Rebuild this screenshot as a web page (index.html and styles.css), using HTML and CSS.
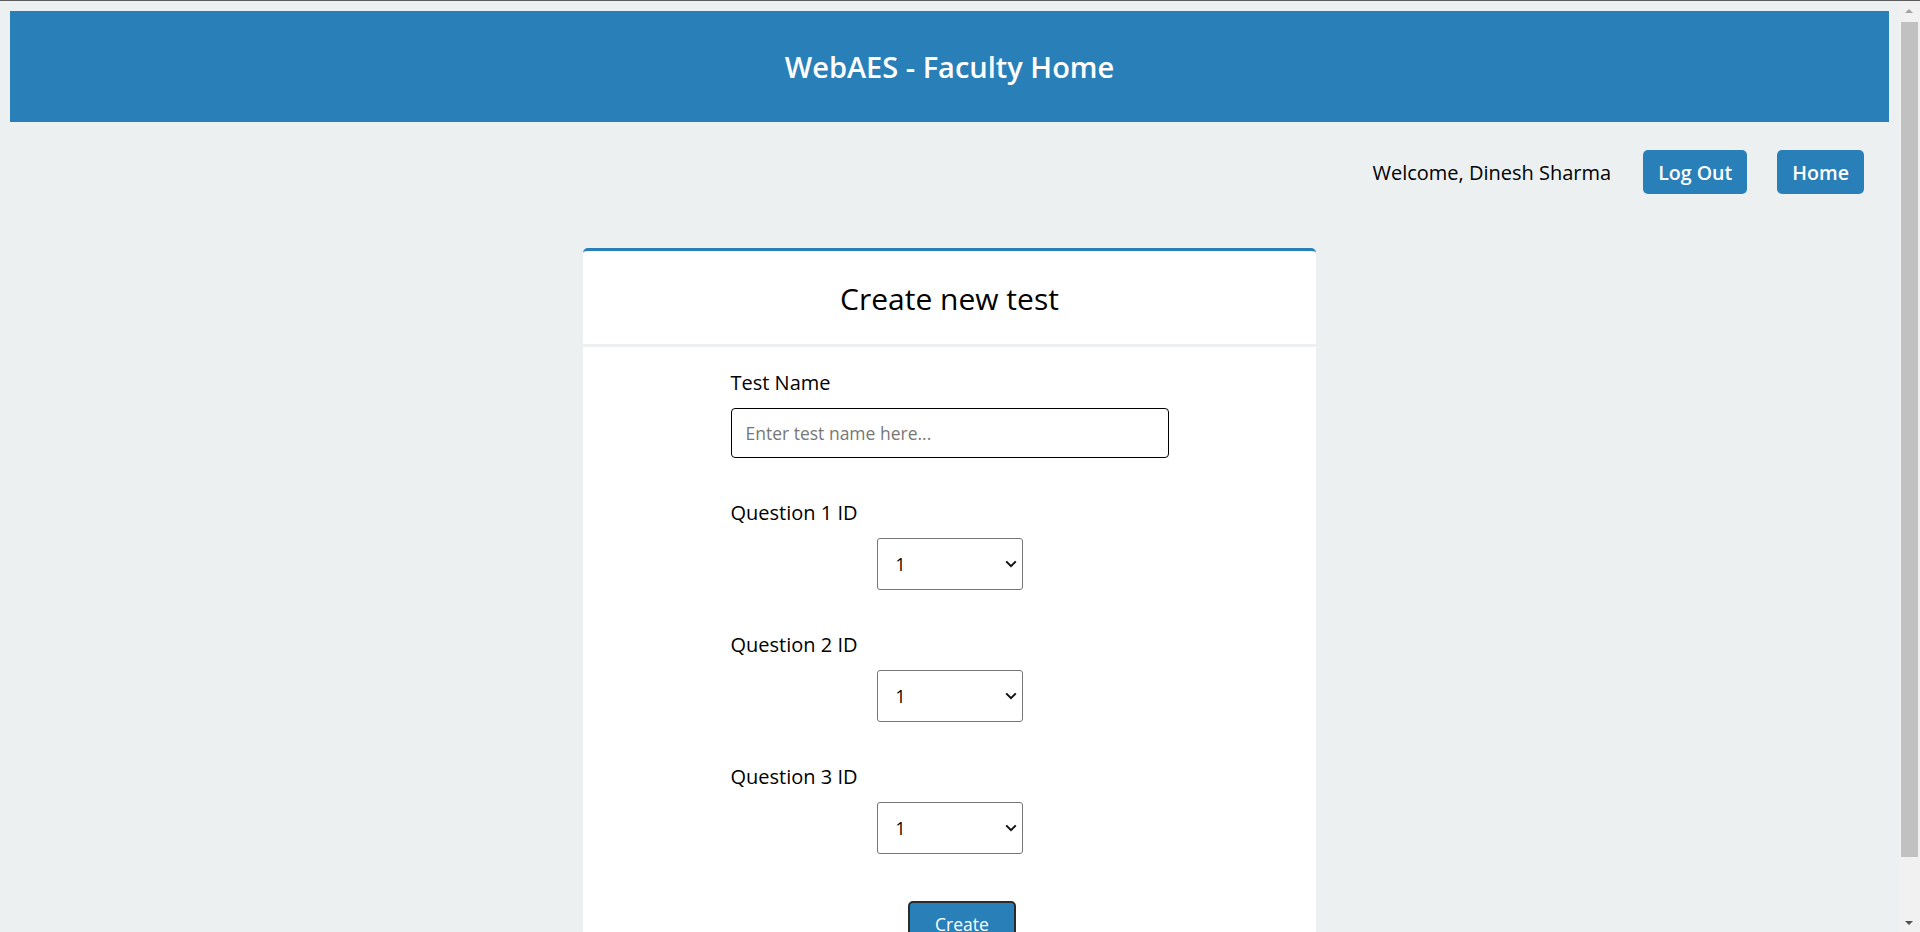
FILE: index.html
```html
<!DOCTYPE html>
<html lang="en">
<head>
<meta charset="utf-8">
<title>WebAES - Faculty Home</title>
<link rel="stylesheet" href="styles.css">
</head>
<body>
<header class="topbar">
  <h1 class="topbar-title">WebAES - Faculty Home</h1>
</header>

<div class="userbar">
  <span class="welcome">Welcome, Dinesh Sharma</span>
  <a class="btn" href="#">Log Out</a>
  <a class="btn" href="#">Home</a>
</div>

<main class="card">
  <div class="card-head">
    <h2 class="card-title">Create new test</h2>
  </div>
  <form class="card-body">
    <div class="field">
      <label class="field-label" for="testname">Test Name</label>
      <input class="text-input" id="testname" type="text" placeholder="Enter test name here...">
    </div>
    <div class="field">
      <label class="field-label" for="q1">Question 1 ID</label>
      <div class="select-wrap">
        <select class="id-select" id="q1"><option>1</option><option>2</option><option>3</option></select>
        <svg class="chevron" width="12" height="8" viewBox="0 0 12 8" aria-hidden="true"><path d="M1.2 1.4 L6 6.2 L10.8 1.4" fill="none" stroke="#111" stroke-width="2"/></svg>
      </div>
    </div>
    <div class="field">
      <label class="field-label" for="q2">Question 2 ID</label>
      <div class="select-wrap">
        <select class="id-select" id="q2"><option>1</option><option>2</option><option>3</option></select>
        <svg class="chevron" width="12" height="8" viewBox="0 0 12 8" aria-hidden="true"><path d="M1.2 1.4 L6 6.2 L10.8 1.4" fill="none" stroke="#111" stroke-width="2"/></svg>
      </div>
    </div>
    <div class="field">
      <label class="field-label" for="q3">Question 3 ID</label>
      <div class="select-wrap">
        <select class="id-select" id="q3"><option>1</option><option>2</option><option>3</option></select>
        <svg class="chevron" width="12" height="8" viewBox="0 0 12 8" aria-hidden="true"><path d="M1.2 1.4 L6 6.2 L10.8 1.4" fill="none" stroke="#111" stroke-width="2"/></svg>
      </div>
    </div>
    <div class="actions">
      <button class="create-btn" type="button">Create</button>
    </div>
  </form>
</main>

<div class="fake-scrollbar" aria-hidden="true">
  <span class="sb-arrow sb-up"></span>
  <span class="sb-thumb"></span>
  <span class="sb-arrow sb-down"></span>
</div>
</body>
</html>
```

FILE: styles.css
```css
html {
  background: #ecf0f1;
  border-top: 1px solid #5b5b5b;
}

body {
  margin: 10px 31px 10px 10px;
  font-family: "Open Sans", "Liberation Sans", sans-serif;
  color: #000;
}

.topbar {
  height: 111px;
  background: #2980b9;
  display: flex;
  align-items: center;
  justify-content: center;
}

.topbar-title {
  margin: 0;
  color: #fff;
  font-size: 29px;
  font-weight: 600;
  line-height: 44px;
}

.userbar {
  display: flex;
  justify-content: flex-end;
  align-items: center;
  height: 44px;
  margin-top: 28px;
  padding-right: 25px;
}

.welcome {
  font-size: 20px;
  line-height: 27px;
  margin-right: 32px;
}

.btn {
  display: flex;
  align-items: center;
  height: 44px;
  box-sizing: border-box;
  padding: 0 15px;
  background: #2980b9;
  color: #fff;
  font-size: 19.6px;
  font-weight: 600;
  text-decoration: none;
  border-radius: 5px;
}

.btn + .btn {
  margin-left: 30px;
}

.card {
  width: 733px;
  margin: 54px auto 0;
  background: #fff;
  border-top: 3px solid #2980b9;
  border-radius: 5px 5px 0 0;
}

.card-head {
  padding: 27px 0 25px;
  border-bottom: 3px solid #ecf0f1;
  text-align: center;
}

.card-title {
  margin: 0;
  font-size: 30px;
  font-weight: 500;
  line-height: 41px;
}

.card-body {
  width: 438px;
  margin: 0 auto;
  padding: 22px 0 36px;
}

.field + .field {
  margin-top: 41px;
}

.field-label {
  display: block;
  font-size: 20px;
  line-height: 27px;
  margin-bottom: 12px;
}

.text-input {
  display: block;
  width: 100%;
  height: 50px;
  box-sizing: border-box;
  padding: 0 14px;
  border: 1px solid #000;
  border-radius: 4px;
  font-family: "Open Sans", "Liberation Sans", sans-serif;
  font-size: 17.5px;
  color: #000;
  background: #fff;
}

.text-input::placeholder {
  color: #777;
}

.select-wrap {
  position: relative;
  width: 146px;
  margin: 0 auto;
}

.id-select {
  display: block;
  width: 146px;
  height: 52px;
  box-sizing: border-box;
  padding: 0 24px 0 18px;
  border: 1px solid #767676;
  border-radius: 3px;
  background-color: #fff;
  color: #000;
  font-family: "Open Sans", "Liberation Sans", sans-serif;
  font-size: 17.5px;
  -webkit-appearance: none;
  appearance: none;
}

.chevron {
  position: absolute;
  right: 6px;
  top: 22px;
  pointer-events: none;
}

.actions {
  margin-top: 47px;
  text-align: center;
}

.create-btn {
  margin-left: 25px;
  padding: 9px 25px;
  border: 2px solid #2b2b2b;
  border-radius: 5px;
  background: #2980b9;
  color: #fff;
  font-family: "Open Sans", "Liberation Sans", sans-serif;
  font-size: 17.5px;
  line-height: 24px;
}

/* stand-in for the browser's vertical scrollbar shown in the capture */
.fake-scrollbar {
  position: fixed;
  top: 1px;
  right: 0;
  width: 21px;
  height: 931px;
  background: #f1f1f1;
}

.sb-thumb {
  position: absolute;
  left: 2px;
  right: 2px;
  top: 21px;
  height: 835px;
  background: #c1c1c1;
}

.sb-arrow {
  position: absolute;
  left: 6px;
  width: 0;
  height: 0;
  border-left: 4.5px solid transparent;
  border-right: 4.5px solid transparent;
}

.sb-up {
  top: 8px;
  border-bottom: 4px solid #a3a3a3;
}

.sb-down {
  bottom: 7px;
  border-top: 4px solid #505050;
}
```
